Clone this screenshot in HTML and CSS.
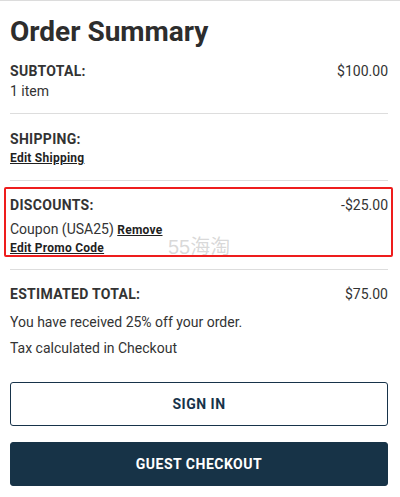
FILE: index.html
```html
<!DOCTYPE html>
<html lang="en">
<head>
<meta charset="utf-8">
<title>Order Summary</title>
<link rel="stylesheet" href="styles.css">
</head>
<body>
<div class="summary">
  <h1 class="title">Order Summary</h1>

  <section class="block block-first">
    <div class="row">
      <span class="label">SUBTOTAL:</span>
      <span class="value">$100.00</span>
    </div>
    <div class="text">1 item</div>
  </section>

  <section class="block block-shipping">
    <div class="row">
      <span class="label">SHIPPING:</span>
    </div>
    <div class="link-line"><a class="link" href="#">Edit Shipping</a></div>
  </section>

  <section class="block highlight">
    <div class="row">
      <span class="label">DISCOUNTS:</span>
      <span class="value">-$25.00</span>
    </div>
    <div class="text coupon">Coupon (USA25) <a class="link" href="#">Remove</a></div>
    <div class="link-line promo"><a class="link" href="#">Edit Promo Code</a></div>
    <span class="watermark">55海淘</span>
  </section>

  <section class="block block-last">
    <div class="row">
      <span class="label">ESTIMATED TOTAL:</span>
      <span class="value">$75.00</span>
    </div>
    <p class="note note-first">You have received 25% off your order.</p>
    <p class="note">Tax calculated in Checkout</p>
  </section>

  <div class="actions">
    <button class="btn btn-outline" type="button">SIGN IN</button>
    <button class="btn btn-solid" type="button">GUEST CHECKOUT</button>
  </div>
</div>
</body>
</html>
```

FILE: styles.css
```css
* { box-sizing: border-box; }

html, body {
  margin: 0;
  padding: 0;
  background: #ffffff;
}

body {
  font-family: Roboto, "Liberation Sans", Arial, sans-serif;
  color: #333333;
  border-top: 1px solid #dcdcdc;
}

.summary {
  padding: 0 12px 0 10px;
}

.title {
  margin: 14px 0 0;
  font-size: 28px;
  line-height: 34px;
  font-weight: 700;
  color: #2d2d2d;
}

.block {
  border-bottom: 1px solid #dddddd;
  padding: 14px 0 12px;
}

.block-first {
  padding-top: 12px;
}

.block-shipping {
  padding-top: 15px;
}

.block-last {
  border-bottom: none;
  padding-bottom: 0;
}

.row {
  display: flex;
  justify-content: space-between;
  align-items: baseline;
  font-size: 14px;
  line-height: 20px;
}

.label {
  font-size: 14px;
  font-weight: 700;
  letter-spacing: 0.3px;
  color: #333333;
}

.value {
  font-size: 14px;
  color: #333333;
}

.text {
  font-size: 14px;
  line-height: 20px;
  color: #333333;
}

.link-line {
  font-size: 12px;
  line-height: 19px;
}

.link {
  font-size: 12px;
  line-height: 1;
  font-weight: 700;
  letter-spacing: 0.25px;
  color: #1f1f1f;
  text-decoration: underline;
  text-underline-offset: 1px;
}

.highlight {
  position: relative;
}

.highlight::after {
  content: "";
  position: absolute;
  left: -6px;
  right: -5px;
  top: 6px;
  bottom: 12px;
  border: 2px solid #ee1d1d;
  border-radius: 2px;
  pointer-events: none;
}

.coupon {
  margin-top: 4px;
}

.promo {
  line-height: 18px;
}

.watermark {
  position: absolute;
  left: 158px;
  top: 55px;
  font-family: "Liberation Sans", "Noto Sans CJK SC", sans-serif;
  font-size: 20px;
  line-height: 22px;
  font-weight: 400;
  color: rgba(170, 170, 170, 0.45);
}

.note {
  margin: 0;
  font-size: 14px;
  line-height: 26px;
  color: #333333;
}

.note-first {
  margin-top: 5px;
}

.actions {
  display: flex;
  flex-direction: column;
  gap: 16px;
  margin-top: 21px;
}

.btn {
  display: block;
  width: 100%;
  height: 44px;
  border-radius: 3px;
  font-family: Roboto, "Liberation Sans", Arial, sans-serif;
  font-size: 14px;
  font-weight: 700;
  letter-spacing: 0.5px;
  cursor: pointer;
}

.btn-outline {
  background: #ffffff;
  border: 1px solid #17334a;
  color: #17334a;
}

.btn-solid {
  background: #173347;
  border: 1px solid #173347;
  color: #ffffff;
}
```
